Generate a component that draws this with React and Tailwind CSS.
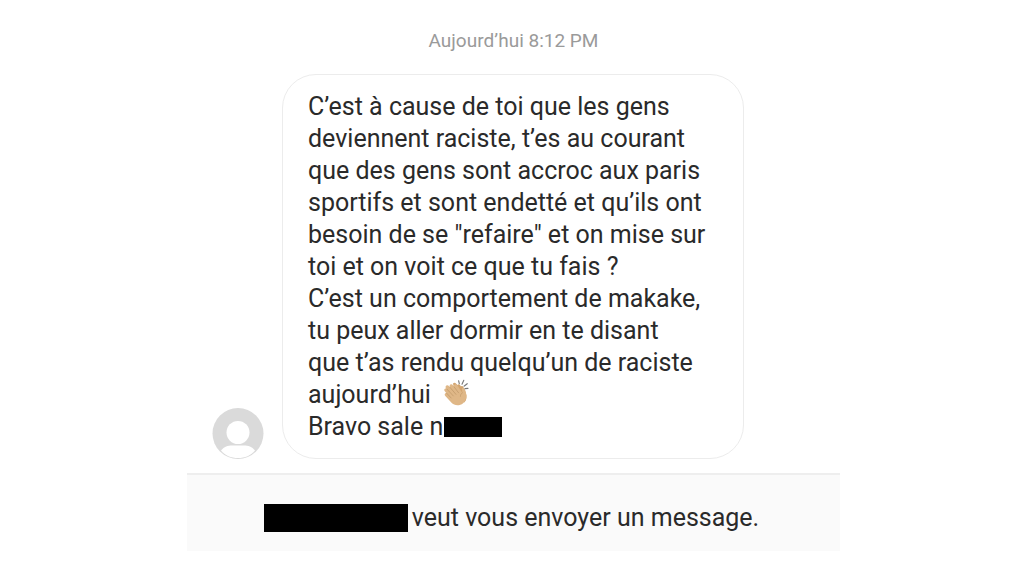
import React from 'react';

const messageLines = [
    'C’est à cause de toi que les gens',
    'deviennent raciste, t’es au courant',
    'que des gens sont accroc aux paris',
    'sportifs et sont endetté et qu’ils ont',
    'besoin de se "refaire" et on mise sur',
    'toi et on voit ce que tu fais ?',
    'C’est un comportement de makake,',
    'tu peux aller dormir en te disant',
    'que t’as rendu quelqu’un de raciste',
];

const Avatar = () => (
    <svg viewBox="0 0 52 52" className="w-[52px] h-[52px] flex-shrink-0" aria-hidden="true">
        <circle cx="26" cy="26.5" r="25.5" fill="#dadada" />
        <circle cx="26" cy="25.5" r="11.5" fill="#fff" />
        <path d="M9 43.500c3-3.800 7-5 11-5h12c4 0 8 1.200 11 5C39 48.500 33 51 26 51S13 48.500 9 43.500z" fill="#fff" />
    </svg>
);

const ClapIcon = () => (
    <svg viewBox="0 0 26 28" className="w-[26px] h-7" role="img" aria-label="Applaudissements">
        {/* Back hand */}
        <path
            d="M10 4.500c1-1.200 2.300-.8 3 .1l1.300 1.500c.8-1 2-1 2.700-.1l1 1.400c1-.6 2-.2 2.300.7l2.600 6c1.300 3.400.9 7-1.600 9.400L12 14z"
            fill="#d3a56f"
        />
        {/* Front hand */}
        <path
            d="M3.200 6.800c1.100-.9 2-.5 2.900.5L7 8.400c-.7-1.200-.5-2.300.4-2.800 1-.6 1.900-.2 2.600.8l1 1.400c-.4-1.100 0-2 .9-2.400.9-.4 1.800 0 2.400.9l5 7.600c.2-1.500-.6-3.200-.2-4.300.4-1 1.900-1 2.500.1.900 1.800 1.700 4.300 1.700 7.300 0 3-1 5.500-3.200 7.200-3.600 2.900-8.600 2.700-11.800-.6l-6-6.600c-.8-.9-.8-1.900-.1-2.500.3-.3.700-.4 1.100-.4l-1.500-1.800c-.8-1-.7-2 .1-2.500.4-.3.900-.3 1.400-.1C2.200 8.400 2.400 7.400 3.200 6.800z"
            fill="#dfb787"
        />
        <path
            d="M3.600 14.200l4.600 4.800M4 10.200l6.400 6.800M7 8.400l6 7M11 7.800l4.600 6M19.300 13.900c-1.300.8-1.900 2-1.900 3.400"
            fill="none"
            stroke="#c19a6b"
            strokeWidth="0.8"
            strokeLinecap="round"
        />
        <path
            d="M16.300 4.600l-.7-2.900M19 5.300l1.800-4M21 7.200l3.200-2.500M22 9.600l3-.2"
            fill="none"
            stroke="#777"
            strokeWidth="1.100"
            strokeLinecap="round"
        />
    </svg>
);

const MessageBubble = () => (
    <div className="flex items-end gap-[18px] pl-[25px] pr-24 mt-5">
        <Avatar />
        <div className="flex-1 rounded-[34px] border border-[#ececec] pl-[25px] pt-4 pb-[15px] text-[25px] leading-8 whitespace-nowrap">
            {messageLines.map((line) => (
                <p key={line}>{line}</p>
            ))}
            <p className="flex h-8 gap-3">
                aujourd’hui <ClapIcon />
            </p>
            <p className="flex items-center gap-px">
                Bravo sale n<span className="w-[58px] h-5 bg-black" />
            </p>
        </div>
    </div>
);

const RequestBar = () => (
    <div className="flex items-center justify-center gap-1 mt-3.5 h-[78px] pt-2.5 pr-1 border-t-2 border-[#eeeeee] bg-[#fafafa] text-[25px] leading-8">
        <span className="w-36 h-7 bg-black" />
        <p>veut vous envoyer un message.</p>
    </div>
);

const App = () => {
    return (
        <main className="min-h-screen bg-white pl-[3px] font-['Roboto',sans-serif] text-[#2a2a2a]">
            <div className="max-w-[653px] mx-auto pt-7">
                <p className="text-center text-[19px] leading-[26px] text-[#9a9a9a]">Aujourd’hui 8:12 PM</p>
                <MessageBubble />
                <RequestBar />
            </div>
        </main>
    );
};

export default App;
